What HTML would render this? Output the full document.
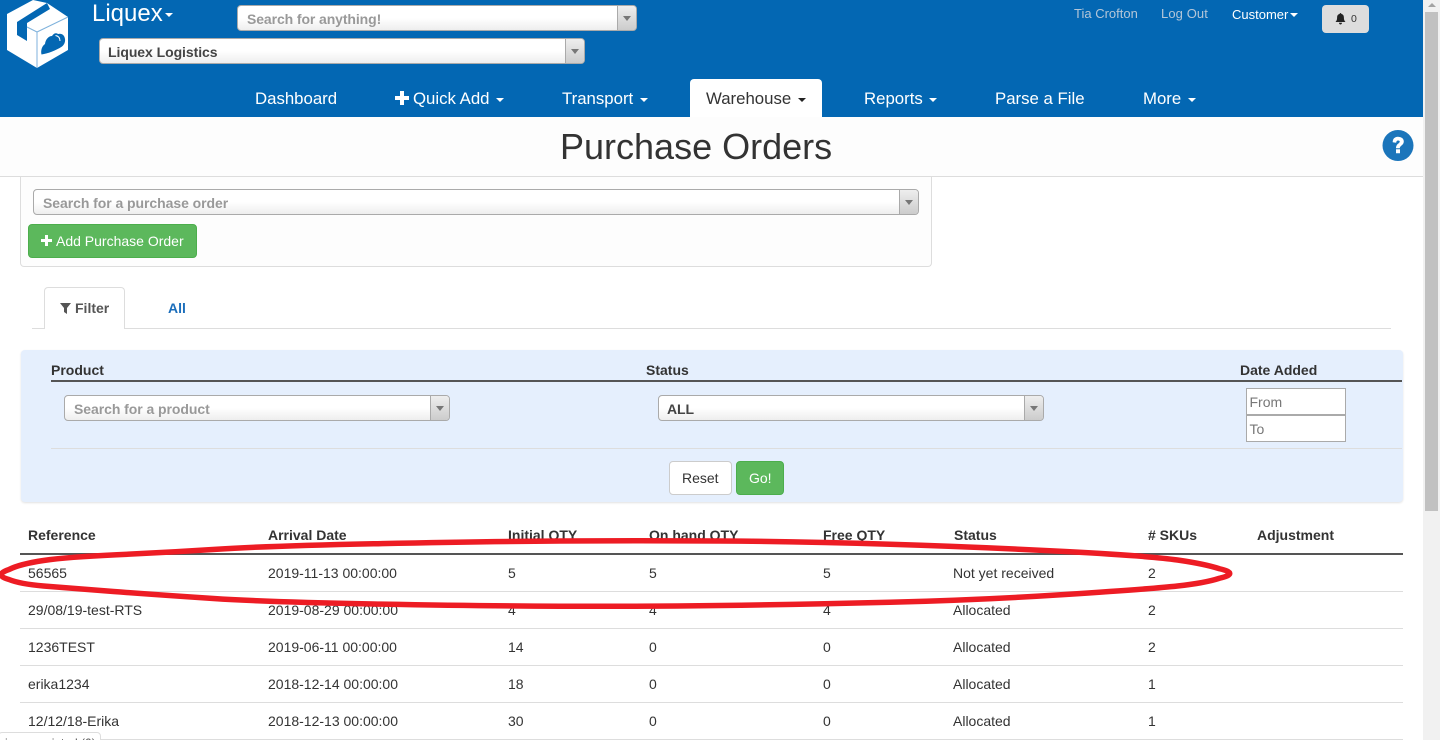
<!DOCTYPE html>
<html><head><meta charset="utf-8"><title>Purchase Orders</title>
<style>
html,body{margin:0;padding:0;width:1440px;height:740px;overflow:hidden;background:#fff}
body{font-family:"Liberation Sans",sans-serif;font-size:14px;color:#333;position:relative}
.a,.t,.s,.c{position:absolute;box-sizing:border-box}
.t{white-space:nowrap;line-height:20px}
.b{font-weight:bold}
.n{font-size:16.8px;color:#fff;line-height:24px;top:87px}
.c{width:0;height:0;border-left:4px solid transparent;border-right:4px solid transparent;border-top:4px solid #fff}
.s{border:1px solid #aaa;border-radius:4px;background:linear-gradient(#fff 0,#fff 50%,#eee 100%);height:26px;font-weight:bold;line-height:26px;padding-left:9px;color:#999;white-space:nowrap;letter-spacing:-.06px}
.s i{position:absolute;right:0;top:0;bottom:0;width:18px;border-left:1px solid #aaa;background:linear-gradient(#eee,#ccc);border-radius:0 3px 3px 0}
.s i:after{content:"";position:absolute;left:5px;top:10px;border-left:4px solid transparent;border-right:4px solid transparent;border-top:5px solid #777}
.l{position:absolute;background:#ddd;height:1px}
</style></head><body>

<div class="a" style="left:0;top:0;width:1423px;height:117px;background:#0367b3"></div>

<svg class="a" style="left:0;top:0" width="80" height="70" viewBox="0 0 80 70">
<polygon points="7,14 33,0 47,3 68,17 68,50 37,68 7,50" fill="#fff"/>
<polygon points="47,3 50,9 27,23 27,41 17,35 17,22" fill="#0367b3"/>
<path d="M37,32V68M37,32L68,17M37,32L27,27" stroke="#7fb2dc" stroke-width="1" fill="none"/>
<path d="M41.500,54.500C40.500,50.500 42,46 45,44C45.500,39.500 48.500,36 52,36C53.500,33.500 56,32.500 58,34C61.500,33 64.500,35 65,39C65.500,42 64,45 62,46.500C56,50.500 48,53.500 41.500,54.500Z" fill="#0367b3"/>
<path d="M55.500,35.500C58.500,36 60,38 60,41" stroke="#fff" stroke-width="1" fill="none"/>
</svg>

<div class="t" style="left:92px;top:0;font-size:24px;line-height:28px;color:#fff">Liquex</div>
<div class="c" style="left:165px;top:13px"></div>

<div class="s" style="left:237px;top:5px;width:400px;letter-spacing:-.1px">Search for anything!<i></i></div>
<div class="s" style="left:99px;top:38px;width:486px;color:#444;padding-left:8px">Liquex Logistics<i></i></div>

<div class="t" style="left:1074px;top:4px;font-size:13px;color:#b4c6d8">Tia Crofton</div>
<div class="t" style="left:1161px;top:4px;font-size:13px;color:#b4c6d8;letter-spacing:.1px">Log Out</div>
<div class="t" style="left:1232px;top:5px;font-size:13px;color:#fff">Customer</div>
<div class="c" style="left:1290px;top:13px"></div>
<div class="a" style="left:1322px;top:5px;width:47px;height:28px;background:#ddd;border-radius:4px"></div>
<svg class="a" style="left:1335px;top:13px" width="11" height="12" viewBox="0 0 11 12"><path d="M5.5,0c-.5,0 -.8,.4 -.8,.9c-1.8,.4 -2.6,1.8 -2.6,3.6c0,2.500 -.7,3.500 -1.600,4.500h10c-.9,-1 -1.600,-2 -1.600,-4.500c0,-1.800 -.8,-3.200 -2.600,-3.600c0,-.5 -.3,-.9 -.8,-.9zM4,9.800c0,1 .7,1.700 1.500,1.700s1.500,-.7 1.500,-1.700z" fill="#222"/></svg>
<div class="t" style="left:1351px;top:9px;font-size:10.500px;color:#333">0</div>

<div class="t n" style="left:255px">Dashboard</div>
<svg class="a" style="left:395px;top:91px" width="14" height="14"><path d="M5,0h4v5h5v4h-5v5h-4v-5h-5v-4h5z" fill="#fff"/></svg>
<div class="t n" style="left:413px">Quick Add</div><div class="c" style="left:496px;top:98px"></div>
<div class="t n" style="left:562px">Transport</div><div class="c" style="left:640px;top:98px"></div>
<div class="a" style="left:690px;top:79px;width:132px;height:38px;background:#fff;border-radius:4px 4px 0 0"></div>
<div class="t n" style="left:706px;color:#333">Warehouse</div><div class="c" style="left:798px;top:98px;border-top-color:#222"></div>
<div class="t n" style="left:864px">Reports</div><div class="c" style="left:929px;top:98px"></div>
<div class="t n" style="left:995px">Parse a File</div>
<div class="t n" style="left:1143px">More</div><div class="c" style="left:1188px;top:98px"></div>

<div class="a" style="left:0;top:117px;width:1423px;height:60px;background:#fdfdfd;border-bottom:1px solid #ddd"></div>
<div class="t" style="left:560px;top:125px;font-size:36px;line-height:44px;color:#333">Purchase Orders</div>
<svg class="a" style="left:1382px;top:130px" width="32" height="31" viewBox="0 0 32 31"><circle cx="16" cy="15.500" r="15.500" fill="#1b75bb"/><path d="M11,12c0,-3 2,-5 5,-5c3.200,0 5.500,1.800 5.500,4.600c0,3.600 -4,3.600 -4,6.400h-3.200c0,-4.300 3.800,-4.300 3.800,-6.200c0,-1 -.9,-1.600 -2,-1.600c-1.200,0 -2,.8 -2.200,2.200zM14.300,19.500h3.400v3.500h-3.400z" fill="#fff" stroke="#fff" stroke-width=".6"/></svg>

<div class="a" style="left:20px;top:177px;width:912px;height:90px;background:#fdfdfd;border:1px solid #ddd;border-top:0;border-radius:0 0 4px 4px"></div>
<div class="s" style="left:33px;top:189px;width:886px">Search for a purchase order<i></i></div>
<div class="a" style="left:28px;top:224px;width:169px;height:34px;background:#5cb85c;border:1px solid #4cae4c;border-radius:4px"></div>
<svg class="a" style="left:41px;top:235px" width="11" height="11"><path d="M4,0h3v4h4v3h-4v4h-3v-4h-4v-3h4z" fill="#fff"/></svg>
<div class="t" style="left:56px;top:231px;color:#fff">Add Purchase Order</div>

<div class="l" style="left:32px;top:328px;width:1359px"></div>
<div class="a" style="left:44px;top:287px;width:81px;height:42px;background:#fff;border:1px solid #ddd;border-bottom:0;border-radius:4px 4px 0 0"></div>
<svg class="a" style="left:60px;top:303px" width="11" height="11"><path d="M0,0h11l-4,5v6l-3,-2v-4z" fill="#555"/></svg>
<div class="t b" style="left:75px;top:298px;color:#555">Filter</div>
<div class="t b" style="left:168px;top:298px;color:#1b6ebb">All</div>

<div class="a" style="left:21px;top:350px;width:1382px;height:152px;background:#e5effd;border-radius:4px;box-shadow:0 1px 2px rgba(0,0,0,.12)"></div>
<div class="t b" style="left:51px;top:360px">Product</div>
<div class="t b" style="left:646px;top:360px">Status</div>
<div class="t b" style="left:1240px;top:360px">Date Added</div>
<div class="a" style="left:51px;top:380px;width:1351px;height:2px;background:#555"></div>
<div class="s" style="left:64px;top:395px;width:386px">Search for a product<i></i></div>
<div class="s" style="left:658px;top:395px;width:386px;color:#444;padding-left:8px">ALL<i></i></div>
<div class="a" style="left:1246px;top:388px;width:100px;height:27px;background:#fff;border:1px solid #aaa"></div>
<div class="a" style="left:1246px;top:415px;width:100px;height:27px;background:#fff;border:1px solid #aaa"></div>
<div class="t" style="left:1249.500px;top:392px;color:#777">From</div>
<div class="t" style="left:1249.500px;top:419px;color:#777">To</div>
<div class="l" style="left:51px;top:448px;width:1351px"></div>
<div class="a" style="left:669px;top:461px;width:63px;height:34px;background:#fff;border:1px solid #ccc;border-radius:4px"></div>
<div class="t" style="left:682px;top:468px">Reset</div>
<div class="a" style="left:736px;top:461px;width:48px;height:34px;background:#5cb85c;border:1px solid #4cae4c;border-radius:4px"></div>
<div class="t" style="left:749px;top:468px;color:#fff">Go!</div>

<div class="t b" style="left:28px;top:525px">Reference</div>
<div class="t b" style="left:268px;top:525px">Arrival Date</div>
<div class="t b" style="left:508px;top:525px">Initial QTY</div>
<div class="t b" style="left:649px;top:525px">On hand QTY</div>
<div class="t b" style="left:823px;top:525px">Free QTY</div>
<div class="t b" style="left:954px;top:525px">Status</div>
<div class="t b" style="left:1148px;top:525px"># SKUs</div>
<div class="t b" style="left:1257px;top:525px">Adjustment</div>
<div class="a" style="left:20px;top:553px;width:1383px;height:2px;background:#555"></div>

<div class="t" style="left:28px;top:563px">56565</div><div class="t" style="left:268px;top:563px">2019-11-13 00:00:00</div><div class="t" style="left:508px;top:563px">5</div><div class="t" style="left:649px;top:563px">5</div><div class="t" style="left:823px;top:563px">5</div><div class="t" style="left:953px;top:563px">Not yet received</div><div class="t" style="left:1148px;top:563px">2</div>
<div class="l" style="left:20px;top:591px;width:1383px"></div>
<div class="t" style="left:28px;top:600px">29/08/19-test-RTS</div><div class="t" style="left:268px;top:600px">2019-08-29 00:00:00</div><div class="t" style="left:508px;top:600px">4</div><div class="t" style="left:649px;top:600px">4</div><div class="t" style="left:823px;top:600px">4</div><div class="t" style="left:953px;top:600px">Allocated</div><div class="t" style="left:1148px;top:600px">2</div>
<div class="l" style="left:20px;top:628px;width:1383px"></div>
<div class="t" style="left:28px;top:637px">1236TEST</div><div class="t" style="left:268px;top:637px">2019-06-11 00:00:00</div><div class="t" style="left:508px;top:637px">14</div><div class="t" style="left:649px;top:637px">0</div><div class="t" style="left:823px;top:637px">0</div><div class="t" style="left:953px;top:637px">Allocated</div><div class="t" style="left:1148px;top:637px">2</div>
<div class="l" style="left:20px;top:665px;width:1383px"></div>
<div class="t" style="left:28px;top:674px">erika1234</div><div class="t" style="left:268px;top:674px">2018-12-14 00:00:00</div><div class="t" style="left:508px;top:674px">18</div><div class="t" style="left:649px;top:674px">0</div><div class="t" style="left:823px;top:674px">0</div><div class="t" style="left:953px;top:674px">Allocated</div><div class="t" style="left:1148px;top:674px">1</div>
<div class="l" style="left:20px;top:702px;width:1383px"></div>
<div class="t" style="left:28px;top:711px">12/12/18-Erika</div><div class="t" style="left:268px;top:711px">2018-12-13 00:00:00</div><div class="t" style="left:508px;top:711px">30</div><div class="t" style="left:649px;top:711px">0</div><div class="t" style="left:823px;top:711px">0</div><div class="t" style="left:953px;top:711px">Allocated</div><div class="t" style="left:1148px;top:711px">1</div>
<div class="l" style="left:20px;top:739px;width:1383px"></div>

<div class="a" style="left:-2px;top:732px;width:103px;height:12px;background:#fff;border:1px solid #ddd;border-radius:4px;overflow:hidden;font-size:12px;line-height:14px;white-space:nowrap;padding:3px 0 0 6px;color:#555">image printed (0)</div>

<svg class="a" style="left:0;top:530px" width="1240" height="90" viewBox="0 530 1240 90">
<path d="M9,569.500Q20,564 43.500,560.500Q67,557 117,554.750Q167,552.500 217,549.250Q267,546 373.500,543.750Q480,541.500 560,541Q640,540.500 720,541Q800,541.500 890,544.250Q980,547 1065,551.500Q1150,556 1177.500,560Q1205,564 1219.500,568.750Q1240,573.500 1219.500,578.250Q1205,583 1177.500,586Q1150,589 1065,594.500Q980,600 890,602.250Q800,604.500 720,605.500Q640,606.500 560,606.250Q480,606 373.500,604Q267,602 213.500,598.500Q160,595 113.500,591.500Q67,588 43.500,586Q20,584 9,579.500Q-7,575 9,569.500Z" fill="none" stroke="#ed1c24" stroke-width="5.500" stroke-linejoin="round"/>
</svg>

<div class="a" style="left:1423px;top:0;width:17px;height:740px;background:#f1f1f1"></div>
<div class="a" style="left:1425px;top:12px;width:13px;height:499px;background:#c1c1c1"></div>
<div class="a" style="left:1428px;top:3px;width:0;height:0;border-left:4px solid transparent;border-right:4px solid transparent;border-bottom:4px solid #a3a3a3"></div>

</body></html>
